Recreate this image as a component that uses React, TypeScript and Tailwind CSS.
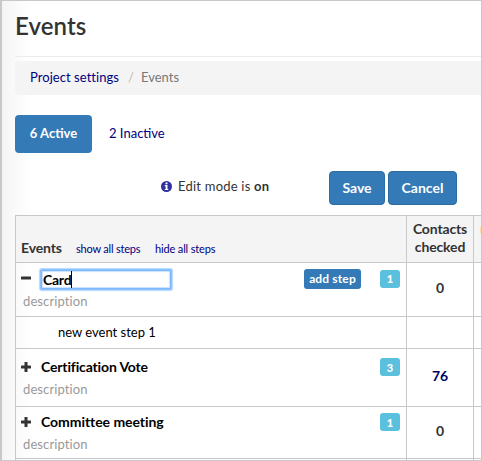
import React from "react";

function ToggleIcon({ open }: { open: boolean }) {
  return (
    <svg width="10" height="10" viewBox="0 0 10 10" fill="#333333" className="block shrink-0">
      <rect x="0" y="3.5" width="10" height="3" rx="0.6" />
      {!open && <rect x="3.5" y="0" width="3" height="10" rx="0.6" />}
    </svg>
  );
}

function Count({ value }: { value: number }) {
  return (
    <span className="mb-[2px] flex h-[18px] w-5 items-center justify-center rounded-[3px] bg-[#5bc0de] text-[11px] font-black leading-none text-white">
      {value}
    </span>
  );
}

type EventRowProps = {
  name: string;
  tracking: string;
  count: number;
  checked: string;
  linked?: boolean;
  height: string;
  inset: string;
};

function EventRow({ name, tracking, count, checked, linked, height, inset }: EventRowProps) {
  return (
    <div className={`flex border-b border-[#c8c8c8] ${height}`}>
      <div className={`w-[390px] shrink-0 ${inset}`}>
        <div className="flex h-5 items-center pl-[5px] pr-[6px]">
          <div className="mb-[2px]">
            <ToggleIcon open={false} />
          </div>
          <span className={`mb-[2px] ml-[10px] flex-1 whitespace-nowrap font-bold leading-5 text-black ${tracking}`}>{name}</span>
          <Count value={count} />
        </div>
        <div className="mt-px pl-[7px] text-[13px] leading-5 tracking-[0.1px] text-[#999999]">description</div>
      </div>
      <div
        className={`flex w-[68px] shrink-0 items-center justify-center border-x border-[#c8c8c8] pb-1 font-bold ${linked ? "text-[#000066]" : "text-[#333333]"}`}
      >
        {checked}
      </div>
    </div>
  );
}

export default function App() {
  return (
    <div className="h-[461px] w-[482px] overflow-hidden border border-l-2 border-[#c8c8c8] bg-white bg-[linear-gradient(to_right,#f5f5f5_0px,#fdfdfd_24px,#ffffff_32px)] font-['Lato',sans-serif] text-[14px] text-[#333333]">
      <div className="flex h-[459px] flex-col pl-[13px]">
        <h1 className="h-[55px] shrink-0 pt-[9px] text-[24px] font-semibold leading-[32px] tracking-[0.1px]">Events</h1>
        <div className="h-px shrink-0 bg-[#ececec]" />
        <nav className="mt-1 flex h-[34px] shrink-0 items-center rounded-l bg-[#f4f4f4] pl-[15px] text-[13px]">
          <a className="w-[98px] whitespace-nowrap tracking-[0.05px] text-[#000080]">Project settings</a>
          <span className="w-[13px] text-[#bbbbbb]">/</span>
          <span className="text-[#777777]">Events</span>
        </nav>
        <div className="mt-5 flex h-[38px] shrink-0 items-center text-[13px]">
          <div className="flex h-[38px] w-[77px] items-center justify-center rounded bg-[#337ab7] font-bold text-white">6 Active</div>
          <div className="ml-[17px] text-[#000080]">2 Inactive</div>
        </div>
        <div className="mt-[18px] flex h-[34px] shrink-0 items-center">
          <svg width="11" height="11" viewBox="0 0 11 11" className="-mt-[3px] ml-[146px]">
            <circle cx="5.5" cy="5.5" r="5.5" fill="#3030a0" />
            <path d="M4.5 1.6h2v1.6h-2zM3.8 4.1h2.7v3.8h.8v1.2H3.8V7.9h.8V5.3h-.8z" fill="#fff" />
          </svg>
          <div className="ml-[6px] w-[151px] whitespace-nowrap pb-[2px] text-[13px] tracking-[0.22px]">
            Edit mode is <b>on</b>
          </div>
          <button className="h-[34px] w-14 rounded border border-[#2e6da4] bg-[#337ab7] pb-[2px] font-bold text-white">Save</button>
          <button className="ml-[3px] h-[34px] w-[69px] rounded border border-[#2e6da4] bg-[#337ab7] pb-[2px] font-bold text-white">Cancel</button>
        </div>
        <div className="mt-[10px] h-[245px] shrink-0 overflow-hidden border-l border-t border-[#c8c8c8]">
          <div className="flex h-[47px] border-b border-[#c8c8c8] bg-[#f4f4f4]">
            <div className="flex w-[390px] shrink-0 items-baseline whitespace-nowrap pl-[5px] pt-[22px]">
              <span className="w-[55px] font-bold leading-5 tracking-[-0.15px]">Events</span>
              <a className="w-[79px] text-[11px] tracking-[-0.2px] text-[#000080]">show all steps</a>
              <a className="text-[11px] tracking-[-0.15px] text-[#000080]">hide all steps</a>
            </div>
            <div className="w-[68px] shrink-0 border-x border-[#c8c8c8] pt-1 text-center font-bold leading-[18px] tracking-[-0.15px]">
              Contacts
              <br />
              checked
            </div>
            <div className="ml-auto mt-[11px] h-[6px] w-px bg-[#f8dda8]" />
          </div>
          <div className="flex h-[54px] border-b border-[#c8c8c8]">
            <div className="w-[390px] shrink-0 pt-[5px]">
              <div className="flex h-[23px] items-center pl-[5px] pr-[6px]">
                <div className="-mt-[3px]">
                  <ToggleIcon open />
                </div>
                <div className="ml-[10px] flex h-[19px] w-[130px] items-center rounded-[1px] border border-[#7db8f8] bg-white font-bold tracking-[-0.25px] text-black shadow-[0_0_0_1px_#8cc2fd,0_0_1px_2px_#b5d8ff,inset_0_0_1px_1px_#c7e1ff]">
                  <span className="pl-px">Card</span>
                  <span className="h-[17px] w-px bg-black" />
                </div>
                <span className="mb-px ml-[133px] flex h-5 w-[57px] items-center justify-center whitespace-nowrap rounded-[3px] bg-[#337ab7] pb-px text-[12px] font-bold tracking-[0.15px] text-white">add step</span>
                <span className="ml-auto">
                  <Count value={1} />
                </span>
              </div>
              <div className="pl-[7px] text-[13px] leading-5 tracking-[0.1px] text-[#999999]">description</div>
            </div>
            <div className="flex w-[68px] shrink-0 items-center justify-center border-x border-[#c8c8c8] pb-[5px] font-bold">0</div>
          </div>
          <div className="flex h-8 border-b border-[#c8c8c8]">
            <div className="flex w-[390px] shrink-0 items-center pl-[42px] text-[13px] text-black">new event step 1</div>
            <div className="w-[68px] shrink-0 border-x border-[#c8c8c8]" />
          </div>
          <EventRow name="Certification Vote" tracking="tracking-[-0.15px]" count={3} checked="76" linked height="h-[58px]" inset="pt-[9px]" />
          <EventRow name="Committee meeting" tracking="tracking-[-0.05px]" count={1} checked="0" height="h-[52px]" inset="pt-[6px]" />
          <div className="flex h-px">
            <div className="w-[390px] shrink-0" />
            <div className="w-[68px] shrink-0 border-x border-[#c8c8c8]" />
          </div>
        </div>
      </div>
    </div>
  );
}
